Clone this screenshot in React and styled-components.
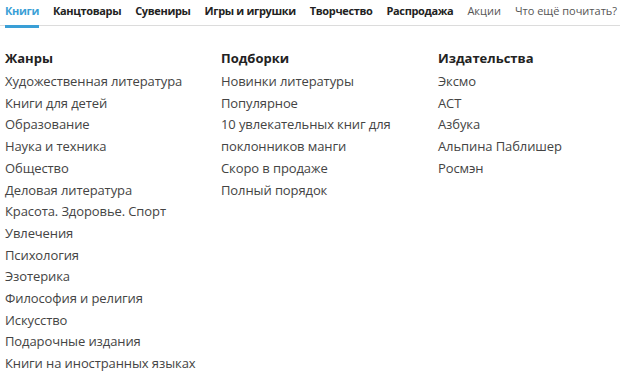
import React from "react";
import styled, { createGlobalStyle } from "styled-components";

const GlobalStyle = createGlobalStyle`
  body {
    margin: 0;
    background: #fff;
    font-family: "Open Sans", "Noto Sans", sans-serif;
    color: #333;
  }
`;

const navItems = [
  { label: "Книги", active: true, bold: true },
  { label: "Канцтовары", bold: true },
  { label: "Сувениры", bold: true },
  { label: "Игры и игрушки", bold: true },
  { label: "Творчество", bold: true },
  { label: "Распродажа", bold: true },
  { label: "Акции" },
  { label: "Что ещё почитать?" },
];

const columns = [
  {
    title: "Жанры",
    items: [
      "Художественная литература",
      "Книги для детей",
      "Образование",
      "Наука и техника",
      "Общество",
      "Деловая литература",
      "Красота. Здоровье. Спорт",
      "Увлечения",
      "Психология",
      "Эзотерика",
      "Философия и религия",
      "Искусство",
      "Подарочные издания",
      "Книги на иностранных языках",
    ],
  },
  {
    title: "Подборки",
    items: [
      "Новинки литературы",
      "Популярное",
      "10 увлекательных книг для поклонников манги",
      "Скоро в продаже",
      "Полный порядок",
    ],
  },
  {
    title: "Издательства",
    items: ["Эксмо", "АСТ", "Азбука", "Альпина Паблишер", "Росмэн"],
  },
];

export default function App() {
  return (
    <Page>
      <GlobalStyle />
      <Nav>
        {navItems.map((item) => (
          <NavItem key={item.label} $active={item.active} $bold={item.bold}>
            {item.label}
          </NavItem>
        ))}
      </Nav>
      <Menu>
        {columns.map((col) => (
          <Column key={col.title}>
            <Heading>{col.title}</Heading>
            {col.items.map((it) => (
              <Link key={it}>{it}</Link>
            ))}
          </Column>
        ))}
      </Menu>
    </Page>
  );
}

const Page = styled.div`
  width: 620px;
  height: 372px;
  overflow: hidden;
`;

const Nav = styled.div`
  display: flex;
  gap: 14px;
  padding: 0 5px;
  height: 25px;
  border-bottom: 1px solid #dcdcdc;
  font-size: 11px;
  white-space: nowrap;
`;

const NavItem = styled.div`
  position: relative;
  padding-top: 3px;
  font-weight: ${(p) => (p.$bold ? 700 : 400)};
  letter-spacing: ${(p) => (p.$bold ? "-0.35px" : "0")};
  color: ${(p) => (p.$active ? "#3a9fd6" : p.$bold ? "#222" : "#555")};

  &::after {
    content: "";
    display: ${(p) => (p.$active ? "block" : "none")};
    position: absolute;
    left: 0;
    right: 0;
    bottom: -3px;
    height: 3px;
    background: #3a9fd6;
  }
`;

const Menu = styled.div`
  display: grid;
  grid-template-columns: 216px 217px 1fr;
  padding: 21px 5px 0;
`;

const Column = styled.div`
  display: flex;
  flex-direction: column;
  padding-right: 8px;
`;

const Heading = styled.div`
  font-size: 13px;
  font-weight: 700;
  color: #222;
  line-height: 22px;
  margin-bottom: 2px;
`;

const Link = styled.div`
  font-size: 13px;
  line-height: 21.7px;
  letter-spacing: -0.1px;
  color: #444;
`;
